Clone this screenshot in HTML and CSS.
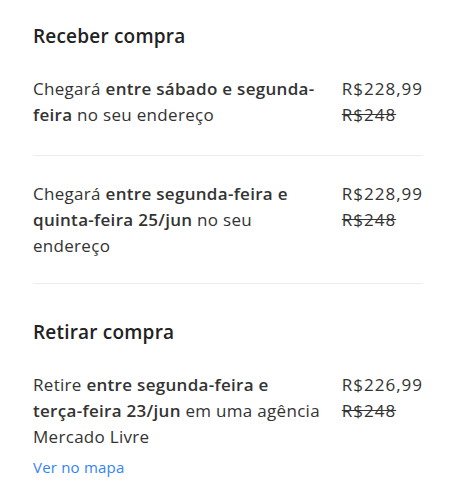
FILE: index.html
```html
<!DOCTYPE html>
<html lang="pt-BR">
<head>
<meta charset="UTF-8" />
<title>Opções de entrega</title>
<link rel="stylesheet" href="styles.css">
</head>
<body>
  <!-- Receber compra -->
  <section class="group">
    <h2 class="group-title">Receber compra</h2>

    <div class="option">
      <p class="option-text">Chegará <b>entre sábado e segunda-feira</b> no seu endereço</p>
      <div class="option-price">
        <span class="price">R$228,99</span>
        <s class="price-old">R$248</s>
      </div>
    </div>

    <div class="option">
      <p class="option-text">Chegará <b>entre segunda-feira e quinta-feira 25/jun</b> no seu endereço</p>
      <div class="option-price">
        <span class="price">R$228,99</span>
        <s class="price-old">R$248</s>
      </div>
    </div>
  </section>

  <!-- Retirar compra -->
  <section class="group">
    <h2 class="group-title">Retirar compra</h2>

    <div class="option option-last">
      <p class="option-text">Retire <b>entre segunda-feira e <span class="nowrap">terça-feira</span> 23/jun</b> em uma agência Mercado Livre</p>
      <div class="option-price">
        <span class="price">R$226,99</span>
        <s class="price-old">R$248</s>
      </div>
    </div>
    <a class="map-link" href="#">Ver no mapa</a>
  </section>
</body>
</html>
```

FILE: styles.css
```css
* {
  box-sizing: border-box;
}

body {
  margin: 0;
  padding: 0 33px;
  background: #fff;
  color: #333;
  font-family: 'Open Sans', 'Noto Sans', sans-serif;
  font-size: 17px;
  line-height: 26px;
  letter-spacing: 0.3px;
}

.group-title {
  margin: 0;
  font-size: 19px;
  line-height: 24px;
  font-weight: 600;
  color: #222;
  letter-spacing: 0.2px;
}

.group:first-child .group-title {
  padding-top: 24px;
}

.group + .group .group-title {
  padding-top: 36px;
}

.option {
  display: flex;
  justify-content: space-between;
  padding: 28px 0 27px;
  border-bottom: 1px solid #ececec;
}

.option + .option {
  padding: 25px 0 24px;
}

.option-last {
  border-bottom: none;
  padding: 28px 0 5px;
}

.option-text {
  margin: 0;
  width: 292px;
}

.option-text b {
  font-weight: 600;
}

.nowrap {
  white-space: nowrap;
}

.option-price {
  display: flex;
  flex-direction: column;
  align-items: flex-start;
  letter-spacing: 1px;
}

.price-old {
  color: #333;
}

.map-link {
  display: block;
  color: #3483fa;
  text-decoration: none;
  font-size: 15px;
  line-height: 24px;
  letter-spacing: 0.2px;
}
```
